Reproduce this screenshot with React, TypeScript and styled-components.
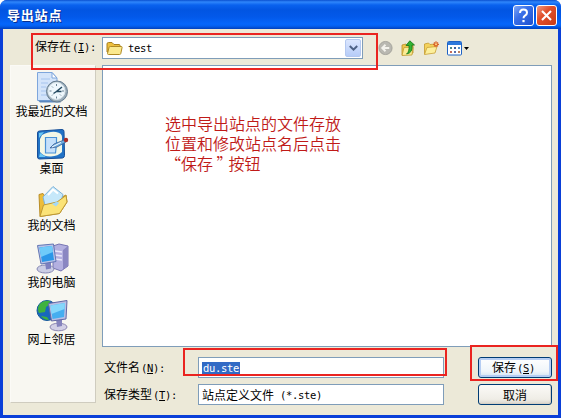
import React from "react";
import styled, { createGlobalStyle } from "styled-components";

const Global = createGlobalStyle`
  * { box-sizing: border-box; }
  html, body { margin: 0; padding: 0; background: #fff; overflow: hidden; }
  body { font-family: "Noto Sans CJK SC", sans-serif; font-size: 12px; color: #000; }
`;

const Window = styled.div`
  position: relative;
  width: 561px;
  height: 418px;
  display: flex;
  flex-direction: column;
  background: #0a3fd8;
  border-radius: 7px 7px 0 0;
  overflow: hidden;
`;

const TitleBar = styled.header`
  height: 29px;
  flex: none;
  display: flex;
  align-items: center;
  padding: 1px 4px 0 7px;
  background: linear-gradient(#0a50d0 0, #2f86fb 2px, #0a62ee 5px, #0255e2 10px, #0359ea 17px, #0566fb 24px, #0460f0 26px, #0140bd 29px);
`;

const Title = styled.h1`
  margin: 0;
  flex: 1;
  color: #fff;
  font-size: 13px;
  letter-spacing: 0.8px;
  line-height: 20px;
  font-weight: 700;
  text-shadow: 1px 1px 0 #0a2f8f;
`;

const CaptionButton = styled.button<{ $close?: boolean }>`
  width: 21px;
  height: 21px;
  margin-left: 2px;
  padding: 0;
  border: 1px solid #fff;
  border-radius: 3px;
  display: grid;
  place-items: center;
  background: ${(p) =>
    p.$close
      ? "linear-gradient(135deg, #f09a80, #e1502c 40%, #c93a14)"
      : "linear-gradient(135deg, #7ea6f6, #3a70e8 40%, #1d50cf)"};
`;

const Body = styled.main`
  flex: 1;
  margin: 0 3px 3px;
  padding: 8px 6px 0 7px;
  background: #ece9d8;
  display: flex;
  flex-direction: column;
`;

const TopRow = styled.div`
  height: 28px;
  flex: none;
  display: flex;
  align-items: flex-start;
`;

const Mono = styled.span`
  font-family: "DejaVu Sans Mono", monospace;
  font-size: 10.5px;
  letter-spacing: -0.32px;
  white-space: pre;
`;

const AccelText = styled(Mono)`
  padding-left: 1px;
`;

const Label = styled.label<{ $indent?: number; $width: number }>`
  width: ${(p) => p.$width}px;
  padding-left: ${(p) => p.$indent ?? 0}px;
  flex: none;
  line-height: 17px;
  white-space: nowrap;
`;

const Hotkey = styled.u`
  text-decoration-thickness: 1px;
  text-underline-offset: 1px;
`;

const Field = styled.div<{ $width: number; $height: number }>`
  width: ${(p) => p.$width}px;
  height: ${(p) => p.$height}px;
  flex: none;
  display: flex;
  align-items: center;
  padding: 0 1px 0 3px;
  border: 1px solid #7f9db9;
  background: #fff;
  white-space: pre;
  line-height: 16px;
`;

const FolderName = styled(Mono)`
  flex: 1;
  padding-left: 5px;
`;

const DropButton = styled.button`
  width: 16px;
  height: 18px;
  padding: 0;
  border: 1px solid #b4c8f0;
  border-radius: 2px;
  background: linear-gradient(#dbe6fe, #b6ccf8);
  display: grid;
  place-items: center;
`;

const Tools = styled.div`
  display: flex;
  align-items: center;
  gap: 7px;
  height: 22px;
  padding-left: 15px;
`;

const Columns = styled.div`
  flex: 1;
  display: flex;
  gap: 6px;
`;

const Places = styled.nav`
  width: 86px;
  height: 338px;
  flex: none;
  padding-top: 5px;
  background: #f8f7f1;
  border: 1px solid #fbfaf6;
  border-right-color: #cfccbf;
  border-bottom-color: #cfccbf;
`;

const Place = styled.div`
  height: 57px;
  display: flex;
  flex-direction: column;
  align-items: center;
  line-height: 14px;
  white-space: nowrap;
  padding-right: 3px;
  svg { flex: none; }
`;

const Main = styled.section`
  width: 450px;
`;

const FileList = styled.div`
  height: 282px;
  border: 1px solid #7f9db9;
  background: #fff;
  padding: 47px 0 0 62px;
`;

const Note = styled.p`
  margin: 0;
  color: #c01a18;
  font-size: 16px;
  font-weight: 350;
  line-height: 20px;
  white-space: pre;
`;

const CloseQuote = styled.span`
  font-feature-settings: "halt";
  margin-right: 4px;
`;

const FormRow = styled.div<{ $gap: number }>`
  display: flex;
  align-items: center;
  height: 21px;
  margin-top: ${(p) => p.$gap}px;
`;

const Selected = styled(Mono)`
  height: 12px;
  line-height: 12px;
  padding: 0 1px;
  background: #316ac5;
  color: #fff;
`;

const PushButton = styled.button<{ $primary?: boolean }>`
  width: 74px;
  height: 21px;
  margin-left: auto;
  padding: ${(p) => (p.$primary ? "0 3px 0 0" : "0")};
  border: 1px solid #003c74;
  border-radius: 3px;
  background: ${(p) =>
    p.$primary ? "linear-gradient(#fff, #eff5fa 70%, #cfe2f3)" : "linear-gradient(#fbfaf7, #efede6 75%, #d8d4ca)"};
  box-shadow: ${(p) => (p.$primary ? "inset 0 0 0 2px #b5cdf3" : "inset -1px -1px 0 #d6d0c5")};
  color: #000;
  font: 12px/17px "Noto Sans CJK SC", sans-serif;
`;

const Highlight = styled.div<{ $x: number; $y: number; $w: number; $h: number }>`
  position: absolute;
  left: ${(p) => p.$x}px;
  top: ${(p) => p.$y}px;
  width: ${(p) => p.$w}px;
  height: ${(p) => p.$h}px;
  border: 2px solid #ea2420;
  pointer-events: none;
`;

const Accel = ({ k, colon = true }: { k: string; colon?: boolean }) => (
  <AccelText>
    (<Hotkey>{k}</Hotkey>){colon ? ":" : ""}
  </AccelText>
);

const FolderIcon = () => (
  <svg width="17" height="15" viewBox="0 0 17 15">
    <path d="M1 11V3q0-1.500 1.500-1.500h3.500L8 3.500h5q1 0 1 1V12z" fill="#eebf3d" stroke="#a8801e" />
    <path d="M1.500 12.500L3 6.500q.3-1 1.300-1h11q1 0 .8 1l-1.300 6q-.2 1-1.300 1H2.500q-1 0-1-1z" fill="#fbe98f" stroke="#b08a24" />
  </svg>
);

const BackIcon = () => (
  <svg width="15" height="16" viewBox="0 0 16 16">
    <circle cx="8" cy="8" r="7" fill="#b9b8b1" stroke="#a3a29b" />
    <path d="M12 8H5M8 4.500L4.500 8 8 11.500" fill="none" stroke="#f3f2ec" strokeWidth="2" />
  </svg>
);

const UpIcon = () => (
  <svg width="16" height="17" viewBox="0 0 16 17">
    <path d="M2 15V5l4-1 1 1.500 6-.5v8z" fill="#f1c84d" stroke="#b98d26" strokeWidth=".8" />
    <path d="M2 15.500l2-8 9-.5-1 8z" fill="#fbeb94" stroke="#c09a30" strokeWidth=".8" />
    <path d="M6.500 14q3-2 2.500-8.500H6L9.800.8 14.500 5H12q1 8-5.500 9z" fill="#35b432" stroke="#14761a" strokeWidth=".8" />
  </svg>
);

const NewFolderIcon = () => (
  <svg width="17" height="16" viewBox="0 0 17 16">
    <path d="M1.500 14V4l4-1 1.500 1.500 5-.5v8z" fill="#f4d25c" stroke="#c49a30" strokeWidth=".8" />
    <path d="M1.500 14.500L4 7.500l10-1-2 6.500z" fill="#fcef9c" stroke="#c9a23a" strokeWidth=".8" />
    <path d="M13 1.300v6M10 4.300h6M11 2.300l4 4M15 2.300l-4 4" stroke="#d9632a" strokeWidth="1.200" />
    <circle cx="13" cy="4.300" r="1" fill="#ffd780" />
  </svg>
);

const ViewsIcon = () => (
  <svg width="23" height="15" viewBox="0 0 23 15">
    <rect x=".5" y=".5" width="14" height="13.500" rx="1" fill="#fff" stroke="#1f63c4" />
    <rect x="1" y="1" width="13" height="3" fill="#2c79dc" />
    <g>
      <rect x="3" y="6" width="2" height="2" fill="#4f8a86" />
      <rect x="7" y="6" width="2" height="2" fill="#3f5f9c" />
      <rect x="11" y="6" width="2" height="2" fill="#4d8cc8" />
      <rect x="3" y="10" width="2" height="2" fill="#c66a58" />
      <rect x="7" y="10" width="2" height="2" fill="#566fae" />
      <rect x="11" y="10" width="2" height="2" fill="#c0805c" />
    </g>
    <path d="M17 6h5l-2.500 3z" fill="#000" />
  </svg>
);

const RecentIcon = () => (
  <svg width="34" height="33" viewBox="0 0 34 33">
    <path d="M2.500 1.500H17L22 7v22.500H2.500z" fill="#d3e4fa" stroke="#7ea6dc" />
    <path d="M17 1.500V7h5z" fill="#fff" stroke="#7ea6dc" />
    <path d="M6 8h9M6 12h7M6 16h5M6 20h5M6 24h6" stroke="#a6c4ee" />
    <path d="M3 29.500h20l3 2H5z" fill="#5b87bf" />
    <circle cx="22" cy="20.500" r="10.500" fill="#9aacb9" stroke="#657c8f" />
    <circle cx="21.500" cy="20" r="8.500" fill="#eff8fd" stroke="#dbe6ec" />
    <path d="M21.500 13v2M21.500 25.500v2M14.500 20h2M27 20h2M17 15.500l1 1M26 24.500l-1-1M17 24.500l1-1" stroke="#6c8494" />
    <path d="M27 16L21.500 20.500h5M21.500 20.500l-3 2" fill="none" stroke="#254b62" strokeWidth="1.500" />
  </svg>
);

const DesktopIcon = () => (
  <svg width="34" height="33" viewBox="0 0 34 33">
    <path d="M2.500 5q0-2 2-2L27 1.500q2 0 2 2l.5 24q0 2-2 2.500l-23 1q-2 0-2-2z" fill="#2273c6" stroke="#174f98" />
    <path d="M7 7q8-4 14-3t6 5v15q-4 4-11 4.500T5 24V11z" fill="#f3f7e6" />
    <path d="M4 5l5-1-5 6zM4 29l1-4 6 4z" fill="#6bc8f4" />
    <path d="M10.500 9.500h11v6l-1 9.500h-10z" fill="#c5e1fb" stroke="#4a92d6" strokeWidth="1.200" />
    <path d="M15 20l4-4 10-4 2 2-9 5z" fill="#6faee0" stroke="#3c5f94" strokeWidth=".8" />
    <path d="M17 19l9-4.500" stroke="#fff" />
    <circle cx="31" cy="12" r="2.200" fill="#a92d27" />
  </svg>
);

const DocumentsIcon = () => (
  <svg width="34" height="33" viewBox="0 0 34 33">
    <path d="M4 9.500l4-1 4 6 12-1 7-3.500 1 7-7.500 11.500L5 31.500z" fill="#edbd38" stroke="#b88d28" />
    <path d="M8 12L18 1.500l10 8-3 10-14 5z" fill="#c6e8fa" stroke="#7db2d9" />
    <path d="M13 10l5-5.500 5 4" fill="none" stroke="#fff" strokeWidth="2" />
    <path d="M5 31.500L8.500 20 22 17l9-6.500 1 6.500-7.500 11.500z" fill="#fbe377" stroke="#bd9834" />
    <path d="M17 19l5-2.500 2 1.500-3 3.500z" fill="#a4d9f6" />
  </svg>
);

const ComputerIcon = () => (
  <svg width="34" height="33" viewBox="0 0 34 33">
    <path d="M18 4l6-2 9 2v20l-7 5-8-3z" fill="#b3b0e0" stroke="#7775b2" />
    <path d="M28 8l5-4v20l-5 3.500z" fill="#8a87c2" />
    <path d="M20 9l7 1M20 13l7 1M20 17l7 1" stroke="#e9e7fa" strokeWidth="1.300" />
    <ellipse cx="10.500" cy="27" rx="8.500" ry="4" fill="#cbcde4" stroke="#8688b4" />
    <path d="M10 20l6-.5v7l-5 1z" fill="#7d80c0" />
    <path d="M2.500 3.500L18.500 2l2.500 17.500L6 22z" fill="#b9c3e8" stroke="#6276b4" />
    <path d="M4.500 5.500L17 4l2 14-12 2z" fill="#2b97e8" />
    <path d="M4.500 5.500L17 4l1 6L6 15z" fill="#6fcbf9" />
  </svg>
);

const NetworkIcon = () => (
  <svg width="34" height="33" viewBox="0 0 34 33">
    <circle cx="12" cy="11.500" r="10" fill="#1868bd" stroke="#165a9a" />
    <path d="M4 6q4-5 11-4l-1 4-3 2-1 5-6 1q-2-4 0-8zM6 17l6 1 2 3q-5 0-8-4z" fill="#3fb23f" />
    <ellipse cx="23.500" cy="28" rx="8.500" ry="3.800" fill="#d3d0e6" stroke="#8c86b2" />
    <path d="M21 20h6v7l-5 1z" fill="#8583bd" />
    <path d="M13.500 4.500L32 1.500l-1 18.500-14.500 2z" fill="#b9bfe4" stroke="#6268a5" />
    <path d="M15.500 6.500L30 4l-1 14-11.500 2z" fill="#45aef0" />
    <path d="M15.500 6.500L30 4l-.5 6L16.500 15z" fill="#85d7fb" />
  </svg>
);

const places = [
  { name: "我最近的文档", Icon: RecentIcon },
  { name: "桌面", Icon: DesktopIcon },
  { name: "我的文档", Icon: DocumentsIcon },
  { name: "我的电脑", Icon: ComputerIcon },
  { name: "网上邻居", Icon: NetworkIcon },
];

export default function App() {
  return (
    <>
      <Global />
      <Window>
        <TitleBar>
          <Title>导出站点</Title>
          <CaptionButton aria-label="帮助">
            <svg width="13" height="15" viewBox="0 0 13 15">
              <path d="M3 5q0-3.500 3.500-3.500T10 4.700Q10 6.500 8 7.600 6.500 8.500 6.500 10.300" fill="none" stroke="#fff" strokeWidth="2" />
              <rect x="5.400" y="12" width="2.200" height="2.200" fill="#fff" />
            </svg>
          </CaptionButton>
          <CaptionButton $close aria-label="关闭">
            <svg width="13" height="13" viewBox="0 0 13 13">
              <path d="M2 2l9 9M11 2l-9 9" stroke="#fff" strokeWidth="2.100" />
            </svg>
          </CaptionButton>
        </TitleBar>
        <Body>
          <TopRow>
            <Label $width={92} $indent={25}>保存在<Accel k="I" /></Label>
            <Field $width={261} $height={22}>
              <FolderIcon />
              <FolderName>test</FolderName>
              <DropButton aria-label="展开">
                <svg width="9" height="7" viewBox="0 0 9 7">
                  <path d="M.8 1l3.700 3.700L8.200 1" fill="none" stroke="#4d6185" strokeWidth="2" />
                </svg>
              </DropButton>
            </Field>
            <Tools>
              <BackIcon />
              <UpIcon />
              <NewFolderIcon />
              <ViewsIcon />
            </Tools>
          </TopRow>
          <Columns>
            <Places>
              {places.map(({ name, Icon }) => (
                <Place key={name}>
                  <Icon />
                  {name}
                </Place>
              ))}
            </Places>
            <Main>
              <FileList>
                <Note>
                  {"选中导出站点的文件存放\n位置和修改站点名后点击\n“保存 "}
                  <CloseQuote>”</CloseQuote>按钮
                </Note>
              </FileList>
              <FormRow $gap={10}>
                <Label $width={96} $indent={2}>文件名<Accel k="N" /></Label>
                <Field $width={246} $height={21}>
                  <Selected>du.ste</Selected>
                </Field>
                <PushButton $primary>保存<Accel k="S" colon={false} /></PushButton>
              </FormRow>
              <FormRow $gap={6}>
                <Label $width={96} $indent={2}>保存类型<Accel k="T" /></Label>
                <Field $width={246} $height={21}>
                  站点定义文件<Mono> (*.ste)</Mono>
                </Field>
                <PushButton>取消</PushButton>
              </FormRow>
            </Main>
          </Columns>
        </Body>
        <Highlight $x={31} $y={33} $w={347} $h={37} />
        <Highlight $x={183} $y={348} $w={264} $h={28} />
        <Highlight $x={470} $y={345} $w={88} $h={36} />
      </Window>
    </>
  );
}
